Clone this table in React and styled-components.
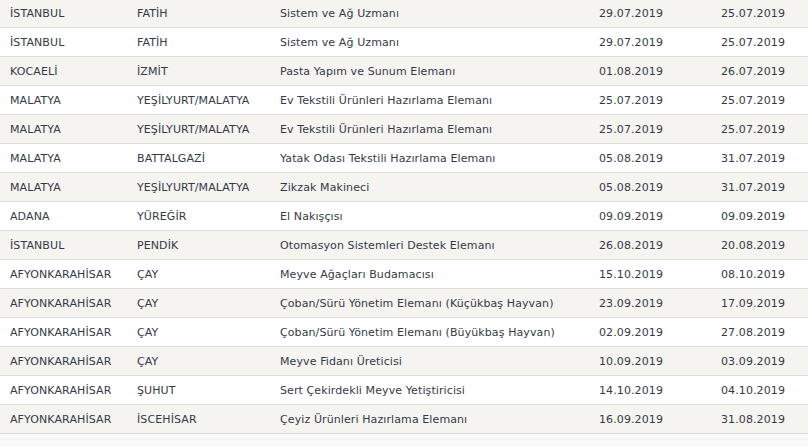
import styled, { createGlobalStyle } from "styled-components"

const GlobalStyle = createGlobalStyle`
  html, body {
    margin: 0;
    padding: 0;
    background: #fafafa;
  }
`

const rows = [
  ["İSTANBUL", "FATİH", "Sistem ve Ağ Uzmanı", "29.07.2019", "25.07.2019"],
  ["İSTANBUL", "FATİH", "Sistem ve Ağ Uzmanı", "29.07.2019", "25.07.2019"],
  ["KOCAELİ", "İZMİT", "Pasta Yapım ve Sunum Elemanı", "01.08.2019", "26.07.2019"],
  ["MALATYA", "YEŞİLYURT/MALATYA", "Ev Tekstili Ürünleri Hazırlama Elemanı", "25.07.2019", "25.07.2019"],
  ["MALATYA", "YEŞİLYURT/MALATYA", "Ev Tekstili Ürünleri Hazırlama Elemanı", "25.07.2019", "25.07.2019"],
  ["MALATYA", "BATTALGAZİ", "Yatak Odası Tekstili Hazırlama Elemanı", "05.08.2019", "31.07.2019"],
  ["MALATYA", "YEŞİLYURT/MALATYA", "Zikzak Makineci", "05.08.2019", "31.07.2019"],
  ["ADANA", "YÜREĞİR", "El Nakışçısı", "09.09.2019", "09.09.2019"],
  ["İSTANBUL", "PENDİK", "Otomasyon Sistemleri Destek Elemanı", "26.08.2019", "20.08.2019"],
  ["AFYONKARAHİSAR", "ÇAY", "Meyve Ağaçları Budamacısı", "15.10.2019", "08.10.2019"],
  ["AFYONKARAHİSAR", "ÇAY", "Çoban/Sürü Yönetim Elemanı (Küçükbaş Hayvan)", "23.09.2019", "17.09.2019"],
  ["AFYONKARAHİSAR", "ÇAY", "Çoban/Sürü Yönetim Elemanı (Büyükbaş Hayvan)", "02.09.2019", "27.08.2019"],
  ["AFYONKARAHİSAR", "ÇAY", "Meyve Fidanı Üreticisi", "10.09.2019", "03.09.2019"],
  ["AFYONKARAHİSAR", "ŞUHUT", "Sert Çekirdekli Meyve Yetiştiricisi", "14.10.2019", "04.10.2019"],
  ["AFYONKARAHİSAR", "İSCEHİSAR", "Çeyiz Ürünleri Hazırlama Elemanı", "16.09.2019", "31.08.2019"],
]

const colWidths = [127, 143, 319, 122, 97]

const Page = styled.div`
  position: relative;
  width: 100%;
  height: 100vh;
  overflow: hidden;
  background: #fafafa;
`

const Pattern = styled.svg`
  position: absolute;
  left: 0;
  right: 0;
  bottom: 0;
  width: 100%;
  height: 60px;
`

const Table = styled.table`
  position: relative;
  width: 808px;
  margin-top: -1px;
  border-collapse: collapse;
  table-layout: fixed;
  font-family: "DejaVu Sans", Verdana, sans-serif;
  font-size: 11px;
  letter-spacing: 0.1px;
  color: #343a46;
`

const Row = styled.tr`
  background: ${(p) => (p.$shaded ? "#f5f4f0" : "#ffffff")};
`

const Cell = styled.td`
  height: 28px;
  padding: 0 0 0 10px;
  border-bottom: 1px solid #dddddd;
  vertical-align: middle;
  white-space: nowrap;
  overflow: hidden;
`

const App = () => {
  return (
    <Page>
      <GlobalStyle />
      <Pattern viewBox="0 0 808 60" preserveAspectRatio="none">
        <defs>
          <pattern id="geo" width="100" height="60" patternUnits="userSpaceOnUse">
            <g stroke="#ebebeb" strokeWidth="1.5" fill="none">
              <path d="M0 0 L30 18 L60 0" />
              <path d="M0 36 L30 18 L60 36" />
              <path d="M15 0 L18 36 M45 0 L42 36" />
              <path d="M30 0 L30 36" />
              <path d="M70 0 L80 36 M100 0 L90 36" />
            </g>
          </pattern>
        </defs>
        <rect width="808" height="60" fill="url(#geo)" />
        <line x1="0" y1="52" x2="808" y2="52" stroke="#efefef" />
      </Pattern>
      <Table>
        <colgroup>
          {colWidths.map((w, i) => (
            <col key={i} style={{ width: w }} />
          ))}
        </colgroup>
        <tbody>
          {rows.map((r, i) => (
            <Row key={i} $shaded={i % 2 === 0}>
              {r.map((c, j) => (
                <Cell key={j}>{c}</Cell>
              ))}
            </Row>
          ))}
        </tbody>
      </Table>
    </Page>
  )
}

export default App
